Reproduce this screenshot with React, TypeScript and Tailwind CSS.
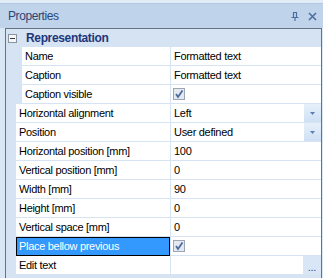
import React from 'react';

type Row = {
  label: string;
  value?: string;
  nested?: boolean;
  kind?: 'text' | 'check' | 'select' | 'dots';
  selected?: boolean;
};

const rows: Row[] = [
  { label: 'Name', value: 'Formatted text', nested: true },
  { label: 'Caption', value: 'Formatted text', nested: true },
  { label: 'Caption visible', kind: 'check', nested: true },
  { label: 'Horizontal alignment', value: 'Left', kind: 'select' },
  { label: 'Position', value: 'User defined', kind: 'select' },
  { label: 'Horizontal position [mm]', value: '100' },
  { label: 'Vertical position [mm]', value: '0' },
  { label: 'Width [mm]', value: '90' },
  { label: 'Height [mm]', value: '0' },
  { label: 'Vertical space [mm]', value: '0' },
  { label: 'Place bellow previous', kind: 'check', selected: true },
  { label: 'Edit text', kind: 'dots' },
];

const Check = () => (
  <div className="w-[12px] h-[12px] border border-[#9ba7b6] bg-[#e4e9f0] flex items-center justify-center">
    <svg width="10" height="10" viewBox="0 0 10 10">
      <path d="M2 5 L4 8 L8.5 1.5" fill="none" stroke="#4b6a9c" strokeWidth="1.8" />
    </svg>
  </div>
);

const PropRow = ({ row }: { row: Row }) => (
  <div className="flex h-[19px] border-b border-[#d5e3f2]">
    <div className={row.nested ? 'w-[16px] shrink-0' : 'w-[10px] shrink-0'} />
    <div
      className={
        row.selected
          ? 'flex items-center w-[154px] shrink-0 bg-[#3399ff] border border-black text-white pl-[2px] -mb-px'
          : (row.nested ? 'w-[148px] ' : 'w-[154px] ') + 'flex items-center shrink-0 bg-white pl-[3px]'
      }
    >
      {row.label}
    </div>
    <div className="w-px bg-[#d5e3f2] shrink-0" />
    <div className="flex-1 flex items-center bg-white">
      {row.kind === 'check' ? (
        <div className="pl-[2px]"><Check /></div>
      ) : (
        <span className="pl-[3px] flex-1">{row.value}</span>
      )}
      {row.kind === 'select' && (
        <div className="ml-auto w-[17px] h-[18px] bg-gradient-to-b from-[#e6f0fb] to-[#cfe0f4] flex items-center justify-center">
          <svg width="5" height="3" viewBox="0 0 5 3">
            <path d="M0 0 H5 L2.5 3 Z" fill="#5a7db2" />
          </svg>
        </div>
      )}
      {row.kind === 'dots' && (
        <div className="ml-auto w-[18px] h-[18px] bg-[#d8e6f6] flex items-end justify-center text-[#2c4fa0] leading-[14px]">
          ...
        </div>
      )}
    </div>
  </div>
);

export default function App() {
  return (
    <div
      className="w-[323px] h-[278px] bg-[#d9e6f4] overflow-hidden text-[11px] tracking-[-0.3px] text-black"
      style={{ fontFamily: '"Liberation Sans", Arial, sans-serif' }}
    >
      <div className="h-[4px] bg-[#e2ecf7] border-b border-[#b3c8e2]" />
      <div className="h-[24px] bg-[#bfd3eb] flex items-center pl-[8px] pr-[6px]">
        <span className="text-[12px] tracking-[-0.4px] text-[#2b4773]">Properties</span>
        <div className="ml-auto flex items-center gap-[9px]">
          <svg width="8" height="9" viewBox="0 0 8 9">
            <path d="M2 0.5 H6 M2.5 0.5 V5 M5.5 0.5 V5 M0.5 5.5 H7.5 M4 5.5 V9" fill="none" stroke="#4b6ea3" strokeWidth="1.2" />
          </svg>
          <svg width="9" height="9" viewBox="0 0 9 9">
            <path d="M1 1 L8 8 M8 1 L1 8" fill="none" stroke="#4b6ea3" strokeWidth="1.6" />
          </svg>
        </div>
      </div>
      <div className="ml-[5px] mr-[1px] border-l border-t border-r border-[#687381] bg-[#d5e3f2]">
        <div className="h-[18px] flex items-center">
          <div className="ml-[2px] w-[9px] h-[9px] border border-[#8a949f] bg-[#f4f6f9] flex items-center justify-center">
            <div className="w-[5px] h-px bg-[#3a3a3a]" />
          </div>
          <span className="ml-[9px] text-[12px] font-bold tracking-[-0.35px] text-[#1f367a]">Representation</span>
        </div>
        {rows.map((r) => (
          <PropRow key={r.label} row={r} />
        ))}
        <div className="h-[10px]" />
      </div>
    </div>
  );
}
